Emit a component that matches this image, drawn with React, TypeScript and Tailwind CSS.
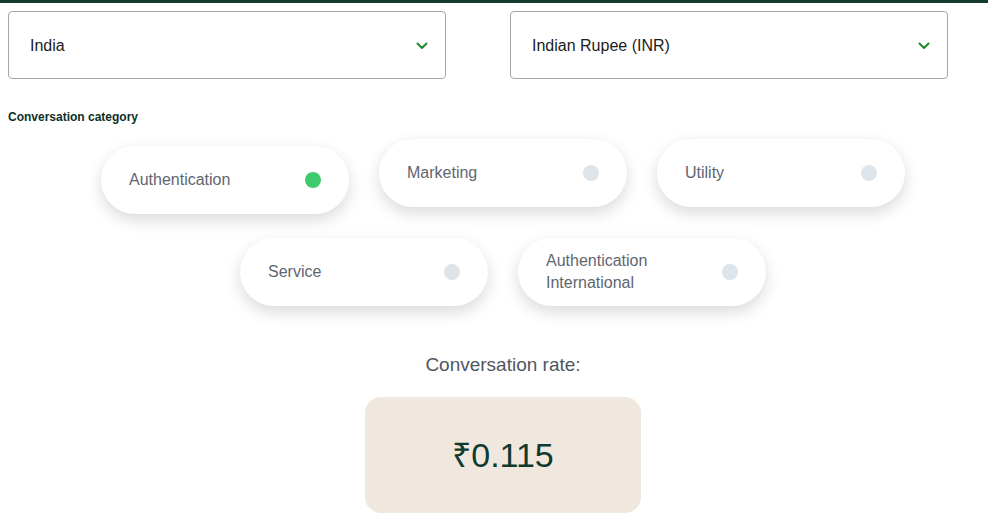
import React, { useState } from "react";

const categories = [
  "Authentication",
  "Marketing",
  "Utility",
  "Service",
  "Authentication International",
];

const Chevron: React.FC = () => (
  <svg width="12" height="8" viewBox="0 0 12 8" fill="none">
    <path
      d="M1.5 1.5L6 6L10.5 1.5"
      stroke="#1f8a2a"
      strokeWidth="2"
      strokeLinecap="round"
      strokeLinejoin="round"
    />
  </svg>
);

const SelectBox: React.FC<{ value: string }> = ({ value }) => (
  <div className="h-[68px] w-[438px] flex items-center justify-between border border-[#a3a8ae] rounded-[4px] pl-[21px] pr-[17px] pt-[2px] bg-white">
    <span className="text-[16px] text-[#1c1c1c]">{value}</span>
    <Chevron />
  </div>
);

const App: React.FC = () => {
  const [selected, setSelected] = useState("Authentication");

  return (
    <div className="w-[988px] h-[517px] bg-white overflow-hidden font-['Liberation_Sans',Arial,sans-serif]">
      <div className="h-[3px] bg-[#133d2c]" />

      <div className="flex gap-[64px] pl-[8px] pt-[8px]">
        <SelectBox value="India" />
        <SelectBox value="Indian Rupee (INR)" />
      </div>

      <p className="pl-[8px] mt-[29px] text-[12px] font-bold text-[#0d2f27]">
        Conversation category
      </p>

      <div className="ml-[101px] mt-[13px] w-[804px] flex flex-wrap justify-center gap-x-[30px] gap-y-[31px]">
        {categories.map((cat) => {
          const active = selected === cat;
          return (
            <button
              key={cat}
              onClick={() => setSelected(cat)}
              className={`w-[248px] h-[68px] rounded-full bg-white flex items-center justify-between pl-[28px] pr-[28px] text-left shadow-[0_6px_16px_rgba(0,0,0,0.15)] cursor-pointer ${
                active ? "translate-y-[7px]" : ""
              }`}
            >
              <span className="text-[16px] leading-[22px] text-[#5f6670] w-[130px]">
                {cat}
              </span>
              <span
                className={`w-[16px] h-[16px] rounded-full shrink-0 ${
                  active ? "bg-[#3fcb6b]" : "bg-[#dde4ea]"
                }`}
              />
            </button>
          );
        })}
      </div>

      <div className="flex flex-col items-center pl-[18px] mt-[46px]">
        <p className="text-[19px] leading-[26px] text-[#4f5761]">Conversation rate:</p>
        <div className="mt-[19px] w-[276px] h-[116px] rounded-[16px] bg-[#f0e8df] flex items-center justify-center">
          <span className="text-[34px] text-[#0f3a2c]">₹0.115</span>
        </div>
      </div>
    </div>
  );
};

export default App;
